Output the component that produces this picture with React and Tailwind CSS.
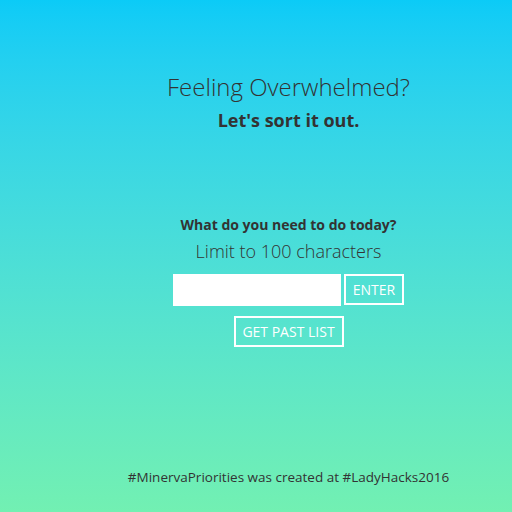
export default function App() {
  return (
    <div
      className="min-h-[512px] w-full bg-gradient-to-b from-[#0bcbf7] to-[#72f0b2] pl-[65px] text-[#333] flex flex-col items-center"
      style={{ fontFamily: '"Open Sans", sans-serif' }}
    >
      <h1 className="mt-[68px] text-[24px] font-light leading-[38px]">Feeling Overwhelmed?</h1>
      <h2 className="mt-[2px] text-[18px] font-bold leading-[24px]">Let's sort it out.</h2>

      <p className="mt-[83px] text-[14px] font-bold leading-[20px]">What do you need to do today?</p>
      <p className="mt-[3px] text-[18px] font-light leading-[26px]">Limit to 100 characters</p>

      <div className="mt-[10px] flex gap-[3px]">
        <input type="text" className="w-[168px] h-[32px] bg-white outline-none border-0 px-2 text-sm" />
        <button className="h-[31px] w-[60px] border-2 border-white text-white text-[14px] leading-none">ENTER</button>
      </div>
      <button className="mt-[10px] h-[31px] w-[110px] border-2 border-white text-white text-[14px] leading-none">
        GET PAST LIST
      </button>

      <p className="mt-[120px] text-[13.5px] leading-[20px]">#MinervaPriorities was created at #LadyHacks2016</p>
    </div>
  );
}
